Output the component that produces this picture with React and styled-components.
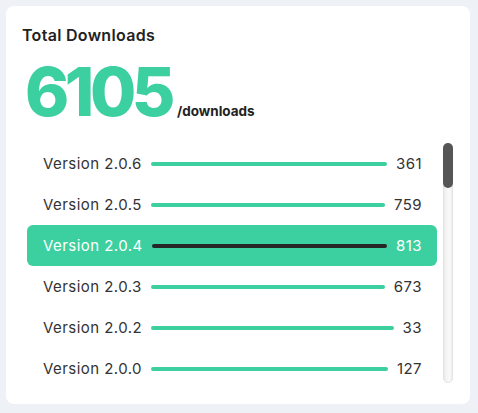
import styled, { createGlobalStyle } from 'styled-components'

const GlobalStyle = createGlobalStyle`
  body {
    margin: 0;
    background: #eef1f5;
    font-family: Inter, "Noto Sans", sans-serif;
  }
`

const Page = styled.div`
  padding: 6px 8px 9px 6px;
`

const Card = styled.div`
  width: 464px;
  height: 398px;
  box-sizing: border-box;
  background: #fff;
  border-radius: 8px;
  padding: 18px 17px 0 16px;
  display: flex;
  flex-direction: column;
`

const Title = styled.h3`
  margin: 0;
  font-size: 16px;
  line-height: 22px;
  font-weight: 600;
  letter-spacing: 0.3px;
  color: #222;
`

const TotalRow = styled.div`
  display: flex;
  align-items: baseline;
  margin-top: 8px;
  margin-left: 3px;
  height: 89px;
`

const Total = styled.span`
  font-size: 67px;
  font-weight: 800;
  line-height: 76px;
  letter-spacing: -4.5px;
  color: #3ccf9f;
`

const Unit = styled.span`
  font-size: 13.5px;
  font-weight: 700;
  color: #222;
  margin-left: 6px;
`

const ListArea = styled.div`
  display: flex;
  gap: 6px;
  padding-left: 5px;
`

const List = styled.div`
  flex: 1;
  display: flex;
  flex-direction: column;
  height: 246px;
  overflow: hidden;
`

const Row = styled.div`
  flex: none;
  height: 41px;
  display: flex;
  align-items: center;
  padding: 0 15px 0 16px;
  border-radius: 6px;
  background: ${p => (p.$active ? '#3ccf9f' : 'transparent')};
  color: ${p => (p.$active ? '#fff' : '#333')};
  font-size: 15px;
  letter-spacing: 0.45px;
`

const Label = styled.span`
  flex: none;
`

const Bar = styled.div`
  flex: 1;
  height: 4px;
  border-radius: 2px;
  margin: 0 9px;
  background: ${p => (p.$active ? '#262626' : '#3ccf9f')};
`

const Value = styled.span`
  flex: none;
`

const Track = styled.div`
  flex: none;
  width: 10px;
  height: 240px;
  box-sizing: border-box;
  border: 1px solid #e2e2e2;
  border-radius: 5px;
  background: linear-gradient(to right, #ececec, #fafafa 60%, #f0f0f0);
  display: flex;
  flex-direction: column;
`

const Thumb = styled.div`
  height: 45px;
  margin: -1px;
  border-radius: 5px;
  background: #565656;
`

const versions = [
  { name: 'Version 2.0.6', count: 361 },
  { name: 'Version 2.0.5', count: 759 },
  { name: 'Version 2.0.4', count: 813, active: true },
  { name: 'Version 2.0.3', count: 673 },
  { name: 'Version 2.0.2', count: 33 },
  { name: 'Version 2.0.0', count: 127 },
]

const App = () => {
  return (
    <Page>
      <GlobalStyle />
      <Card>
        <Title>Total Downloads</Title>
        <TotalRow>
          <Total>6105</Total>
          <Unit>/downloads</Unit>
        </TotalRow>
        <ListArea>
          <List>
            {versions.map(v => (
              <Row key={v.name} $active={v.active}>
                <Label>{v.name}</Label>
                <Bar $active={v.active} />
                <Value>{v.count}</Value>
              </Row>
            ))}
          </List>
          <Track>
            <Thumb />
          </Track>
        </ListArea>
      </Card>
    </Page>
  )
}

export default App
